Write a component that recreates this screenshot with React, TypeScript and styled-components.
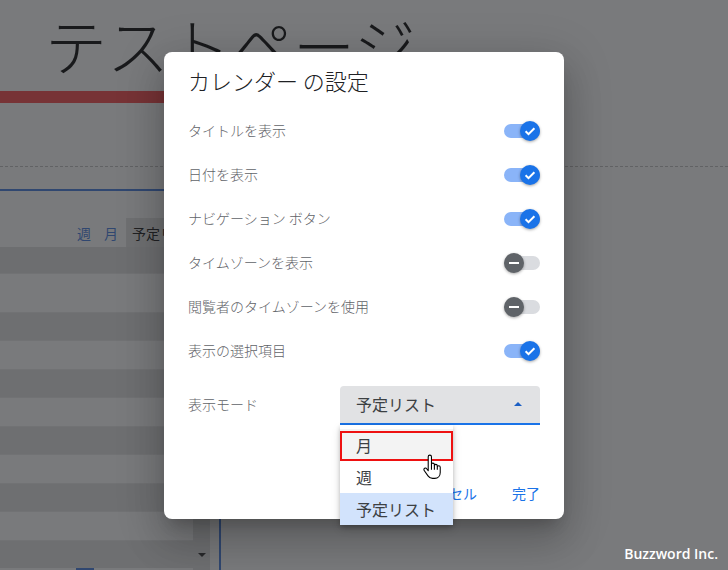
import React from "react";
import styled, { createGlobalStyle } from "styled-components";

const GlobalStyle = createGlobalStyle`
  html, body { margin: 0; padding: 0; }
  body {
    width: 728px;
    height: 570px;
    overflow: hidden;
    background: #fff;
    font-family: Roboto, "Noto Sans CJK JP", sans-serif;
  }
`;

const BLUE = "#1a73e8";
const PAGE_BLUE = "#4a7fe0";

const Page = styled.div`
  position: relative;
  width: 728px;
  height: 570px;
  overflow: hidden;
  display: flex;
  flex-direction: column;
`;

const Heading = styled.h1`
  margin: 13px 0 0 45px;
  font-family: "Noto Sans CJK JP", sans-serif;
  font-weight: 300;
  font-size: 62px;
  line-height: 62px;
  color: #111;
  white-space: nowrap;
`;

const RedBar = styled.div`
  margin-top: 16px;
  width: 470px;
  height: 12px;
  background: #fa4f52;
`;

const DashedRule = styled.div`
  margin-top: 63px;
  border-top: 1px dashed #c4c4c4;
`;

const BlueRule = styled.div`
  margin-top: 22px;
  width: 470px;
  height: 2px;
  background: ${PAGE_BLUE};
`;

const Content = styled.div`
  margin-top: 27px;
  flex: 1;
  display: flex;
  gap: 9px;
`;

const Calendar = styled.div`
  width: 210px;
  display: flex;
  flex-direction: column;
`;

const Tabs = styled.div`
  height: 29px;
  display: flex;
  align-items: center;
  gap: 13px;
  padding-left: 77px;
  font-family: "Noto Sans CJK JP", sans-serif;
  font-size: 14px;
`;

const TabLink = styled.span`
  color: ${PAGE_BLUE};
`;

const ActiveTab = styled.span`
  flex: 1;
  align-self: stretch;
  margin-left: -5px;
  padding-left: 6px;
  display: flex;
  align-items: center;
  background: #e6e6e6;
  color: #222;
  white-space: nowrap;
  overflow: hidden;
`;

const HeaderBand = styled.div`
  height: 26px;
  background: #e2e2e2;
`;

const Body = styled.div`
  flex: 1;
  display: flex;
`;

const List = styled.div`
  flex: 1;
  display: flex;
  flex-direction: column;
`;

const Row = styled.div<{ $h: number; $dark: boolean }>`
  height: ${(p) => p.$h}px;
  background: ${(p) => (p.$dark ? "#e4e4e4" : "#fff")};
  border-top: 1px solid #ececec;
  box-sizing: border-box;
`;

const BlueNub = styled.div`
  margin-left: 76px;
  width: 18px;
  height: 2px;
  background: ${PAGE_BLUE};
`;

const ScrollTrack = styled.div`
  width: 17px;
  background: #e4e4e4;
  display: flex;
  flex-direction: column;
  justify-content: flex-end;
  align-items: center;
`;

const DownArrow = styled.div`
  margin-bottom: 13px;
  width: 0;
  height: 0;
  border-left: 4px solid transparent;
  border-right: 4px solid transparent;
  border-top: 4px solid #333;
`;

const VerticalRule = styled.div`
  width: 2px;
  background: ${PAGE_BLUE};
`;

const Overlay = styled.div`
  position: absolute;
  inset: 0;
  background: rgba(32, 33, 36, 0.6);
`;

const Dialog = styled.div`
  position: absolute;
  left: 164px;
  top: 52px;
  width: 400px;
  height: 467px;
  box-sizing: border-box;
  padding: 14px 24px 8px;
  display: flex;
  flex-direction: column;
  background: #fff;
  border-radius: 8px;
  box-shadow: 0 11px 15px -7px rgba(0, 0, 0, 0.2), 0 24px 38px 3px rgba(0, 0, 0, 0.14),
    0 9px 46px 8px rgba(0, 0, 0, 0.12);
`;

const DialogTitle = styled.h2`
  margin: 0;
  font-family: "Noto Sans CJK JP", sans-serif;
  font-weight: 300;
  font-size: 22px;
  line-height: 28px;
  color: #202124;
`;

const SettingList = styled.div`
  margin-top: 14px;
  display: flex;
  flex-direction: column;
`;

const SettingRow = styled.div`
  height: 44px;
  display: flex;
  align-items: center;
  justify-content: space-between;
`;

const Label = styled.span`
  font-family: "Noto Sans CJK JP", sans-serif;
  font-size: 14px;
  font-weight: 300;
  color: #5f6368;
`;

const Track = styled.div<{ $on: boolean }>`
  position: relative;
  width: 36px;
  height: 14px;
  border-radius: 7px;
  margin-top: 2px;
  background: ${(p) => (p.$on ? "#8ab4f8" : "#dadce0")};
`;

const Thumb = styled.div<{ $on: boolean }>`
  position: absolute;
  top: -3px;
  left: ${(p) => (p.$on ? "16px" : "0")};
  width: 20px;
  height: 20px;
  border-radius: 50%;
  background: ${(p) => (p.$on ? BLUE : "#5f6368")};
  box-shadow: 0 1px 3px rgba(0, 0, 0, 0.35);
  display: flex;
  align-items: center;
  justify-content: center;
`;

const Minus = styled.span`
  width: 10px;
  height: 2px;
  background: #fff;
`;

const ModeRow = styled.div`
  margin-top: 14px;
  display: flex;
  align-items: center;
  justify-content: space-between;
`;

const ModeLabel = styled(Label)`
  margin-bottom: 4px;
`;

const Select = styled.div`
  position: relative;
  width: 200px;
  height: 39px;
  box-sizing: border-box;
  padding: 0 18px 2px 16px;
  display: flex;
  align-items: center;
  justify-content: space-between;
  background: #e1e2e4;
  border-bottom: 2px solid ${BLUE};
  border-radius: 4px 4px 0 0;
  font-family: "Noto Sans CJK JP", sans-serif;
  font-size: 16px;
  color: #3c4043;
`;

const UpArrow = styled.span`
  width: 0;
  height: 0;
  border-left: 4px solid transparent;
  border-right: 4px solid transparent;
  border-bottom: 4px solid #1b5fc4;
`;

const Menu = styled.div`
  position: absolute;
  top: 100%;
  left: 0;
  width: 113px;
  margin-top: 2px;
  padding: 4px 0 0;
  background: #fff;
  border-radius: 0 0 4px 4px;
  box-shadow: 0 2px 4px rgba(0, 0, 0, 0.2), 0 4px 10px rgba(0, 0, 0, 0.14);
  z-index: 2;
`;

const MenuItem = styled.div<{ $state?: "hover" | "selected" }>`
  position: relative;
  height: 32px;
  padding: 0 16px;
  display: flex;
  align-items: center;
  font-size: 16px;
  color: #3c4043;
  background: ${(p) =>
    p.$state === "hover" ? "#f3f3f3" : p.$state === "selected" ? "#d2e3fc" : "#fff"};
`;

const Callout = styled.div`
  position: absolute;
  top: 2px;
  left: 0;
  right: 0;
  bottom: 0;
  border: 2px solid #ee1111;
`;

const Pointer = styled.svg`
  position: absolute;
  left: 82px;
  top: 29px;
  width: 20px;
  height: 26px;
  z-index: 3;
`;

const Actions = styled.div`
  margin-top: auto;
  height: 36px;
  display: flex;
  align-items: center;
  justify-content: flex-end;
  gap: 35px;
`;

const TextButton = styled.button`
  padding: 0;
  border: 0;
  background: none;
  font-family: Roboto, "Noto Sans CJK JP", sans-serif;
  font-size: 14px;
  font-weight: 400;
  color: ${BLUE};
`;

const Watermark = styled.div`
  position: absolute;
  right: 10px;
  bottom: 7px;
  font-family: "Open Sans", sans-serif;
  font-weight: 600;
  font-size: 14px;
  color: #fff;
`;

const settings = [
  { label: "タイトルを表示", on: true },
  { label: "日付を表示", on: true },
  { label: "ナビゲーション ボタン", on: true },
  { label: "タイムゾーンを表示", on: false },
  { label: "閲覧者のタイムゾーンを使用", on: false },
  { label: "表示の選択項目", on: true },
];

const rowHeights = [39, 28, 29, 28, 29, 28, 29, 28, 29, 28];

function Toggle({ on }: { on: boolean }) {
  return (
    <Track $on={on}>
      <Thumb $on={on}>
        {on ? (
          <svg width="20" height="20" viewBox="0 0 20 20">
            <path d="M5.6 10.3l2.9 2.9 5.9-6" fill="none" stroke="#fff" strokeWidth="2" />
          </svg>
        ) : (
          <Minus />
        )}
      </Thumb>
    </Track>
  );
}

export default function App() {
  return (
    <Page>
      <GlobalStyle />
      <Heading>テストページ</Heading>
      <RedBar />
      <DashedRule />
      <BlueRule />
      <Content>
        <Calendar>
          <Tabs>
            <TabLink>週</TabLink>
            <TabLink>月</TabLink>
            <ActiveTab>予定リスト</ActiveTab>
          </Tabs>
          <HeaderBand />
          <Body>
            <List>
              {rowHeights.map((h, i) => (
                <Row key={i} $h={h} $dark={i % 2 === 1} />
              ))}
              <BlueNub />
            </List>
            <ScrollTrack>
              <DownArrow />
            </ScrollTrack>
          </Body>
        </Calendar>
        <VerticalRule />
      </Content>

      <Overlay />

      <Dialog>
        <DialogTitle>カレンダー の設定</DialogTitle>
        <SettingList>
          {settings.map((s) => (
            <SettingRow key={s.label}>
              <Label>{s.label}</Label>
              <Toggle on={s.on} />
            </SettingRow>
          ))}
        </SettingList>
        <ModeRow>
          <ModeLabel>表示モード</ModeLabel>
          <Select>
            予定リスト
            <UpArrow />
            <Menu>
              <MenuItem $state="hover">
                月
                <Callout />
              </MenuItem>
              <MenuItem>週</MenuItem>
              <MenuItem $state="selected">予定リスト</MenuItem>
              <Pointer viewBox="0 0 18 24">
                <path
                  d="M7 1C7.8 1 8.5 1.7 8.5 2.5V9C8.8 8.6 9.3 8.4 9.8 8.4C10.6 8.4 11.2 9 11.2 9.8V10.2C11.5 9.8 12 9.6 12.5 9.6C13.3 9.6 13.9 10.2 13.9 11V11.4C14.2 11 14.7 10.8 15.2 10.8C16 10.8 16.6 11.4 16.6 12.2V17C16.6 20 14.6 22.5 11.5 22.5H9.5C7.5 22.5 6.3 21.6 5.3 20.2L1.8 15.2C1.3 14.5 1.5 13.6 2.2 13.2C2.9 12.8 3.7 13 4.1 13.6L5.5 15.5V2.5C5.5 1.7 6.2 1 7 1Z"
                  fill="#fff"
                  stroke="#000"
                  strokeWidth="1"
                  strokeLinejoin="round"
                />
                <path d="M8.5 9V14.5M11.2 10.2V14.5M13.9 11.4V14.5" stroke="#000" strokeWidth="1" fill="none" />
              </Pointer>
            </Menu>
          </Select>
        </ModeRow>
        <Actions>
          <TextButton>キャンセル</TextButton>
          <TextButton>完了</TextButton>
        </Actions>
      </Dialog>

      <Watermark>Buzzword Inc.</Watermark>
    </Page>
  );
}
